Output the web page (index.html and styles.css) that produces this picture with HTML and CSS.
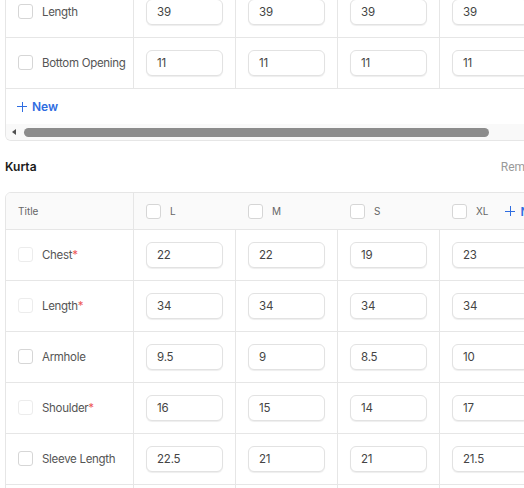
FILE: index.html
```html
<!DOCTYPE html>
<html lang="en">
<head>
  <meta charset="UTF-8" />
  <meta name="viewport" content="width=device-width, initial-scale=1.0" />
  <title>Size Chart</title>
  <link rel="stylesheet" href="styles.css">
</head>
<body>
  <div class="page">
    <div class="card card-top">
      <div class="row">
        <div class="cell title-cell"><span class="check"></span>Length</div>
        <div class="cell"><input class="val" value="39" /></div>
        <div class="cell"><input class="val" value="39" /></div>
        <div class="cell"><input class="val" value="39" /></div>
        <div class="cell"><input class="val" value="39" /></div>
      </div>
      <div class="row">
        <div class="cell title-cell"><span class="check"></span>Bottom Opening</div>
        <div class="cell"><input class="val" value="11" /></div>
        <div class="cell"><input class="val" value="11" /></div>
        <div class="cell"><input class="val" value="11" /></div>
        <div class="cell"><input class="val" value="11" /></div>
      </div>
      <div class="new-row">
        <button class="add-btn"><span class="plus"></span>New</button>
      </div>
      <div class="hscroll">
        <span class="arrow-left"></span>
        <span class="thumb"></span>
      </div>
    </div>

    <div class="section-head">
      <span class="section-name">Kurta</span>
      <button class="remove-btn">Remove</button>
    </div>

    <div class="card">
      <div class="row head-row">
        <div class="cell title-cell head-title">Title</div>
        <div class="cell head-cell"><span class="check"></span>L</div>
        <div class="cell head-cell"><span class="check"></span>M</div>
        <div class="cell head-cell"><span class="check"></span>S</div>
        <div class="cell head-cell"><span class="check"></span>XL<button class="add-btn add-col"><span class="plus"></span>New</button></div>
      </div>
      <div class="row">
        <div class="cell title-cell"><span class="check light"></span>Chest<span class="req">*</span></div>
        <div class="cell"><input class="val" value="22" /></div>
        <div class="cell"><input class="val" value="22" /></div>
        <div class="cell"><input class="val" value="19" /></div>
        <div class="cell"><input class="val" value="23" /></div>
      </div>
      <div class="row">
        <div class="cell title-cell"><span class="check light"></span>Length<span class="req">*</span></div>
        <div class="cell"><input class="val" value="34" /></div>
        <div class="cell"><input class="val" value="34" /></div>
        <div class="cell"><input class="val" value="34" /></div>
        <div class="cell"><input class="val" value="34" /></div>
      </div>
      <div class="row">
        <div class="cell title-cell"><span class="check"></span>Armhole</div>
        <div class="cell"><input class="val" value="9.5" /></div>
        <div class="cell"><input class="val" value="9" /></div>
        <div class="cell"><input class="val" value="8.5" /></div>
        <div class="cell"><input class="val" value="10" /></div>
      </div>
      <div class="row">
        <div class="cell title-cell"><span class="check light"></span>Shoulder<span class="req">*</span></div>
        <div class="cell"><input class="val" value="16" /></div>
        <div class="cell"><input class="val" value="15" /></div>
        <div class="cell"><input class="val" value="14" /></div>
        <div class="cell"><input class="val" value="17" /></div>
      </div>
      <div class="row">
        <div class="cell title-cell"><span class="check"></span>Sleeve Length</div>
        <div class="cell"><input class="val" value="22.5" /></div>
        <div class="cell"><input class="val" value="21" /></div>
        <div class="cell"><input class="val" value="21" /></div>
        <div class="cell"><input class="val" value="21.5" /></div>
      </div>
      <div class="row">
        <div class="cell title-cell"></div>
        <div class="cell"></div>
        <div class="cell"></div>
        <div class="cell"></div>
        <div class="cell"></div>
      </div>
    </div>
  </div>
</body>
</html>
```

FILE: styles.css
```css
body {
  margin: 0;
  overflow: hidden;
  font-family: Inter, 'Noto Sans', sans-serif;
  font-size: 11.5px;
  letter-spacing: -0.3px;
  color: #555;
  background: white;
}
.page {
  width: 560px;
  margin-left: 5px;
}
.card {
  border: 1px solid #e6e6e6;
  border-radius: 6px;
  overflow: hidden;
  background: white;
}
.card-top {
  margin-top: -13px;
  border-top: none;
  border-top-left-radius: 0;
  border-top-right-radius: 0;
}
.row {
  display: flex;
  border-bottom: 1px solid #e6e6e6;
}
.cell {
  box-sizing: border-box;
  flex: none;
  width: 102px;
  height: 50px;
  padding: 0 12px;
  display: flex;
  align-items: center;
  white-space: nowrap;
  border-right: 1px solid #e6e6e6;
}
.title-cell {
  width: 128px;
  padding-bottom: 1px;
}
.check {
  box-sizing: border-box;
  width: 15px;
  height: 15px;
  margin-right: 9px;
  border: 1px solid #d6d6d6;
  border-radius: 3px;
  background: white;
  flex: none;
}
.check.light {
  border-color: #ececec;
}
.req {
  color: #ee5a5a;
}
.val {
  box-sizing: border-box;
  width: 77px;
  height: 26px;
  padding: 0 10px;
  border: 1px solid #e2e2e2;
  border-radius: 6px;
  box-shadow: 0 1px 1px rgba(0,0,0,0.07);
  font-family: Inter, 'Noto Sans', sans-serif;
  font-size: 11.5px;
  letter-spacing: -0.2px;
  color: #444;
  outline: none;
}
.head-row {
  background: #fafafa;
}
.head-row .cell {
  height: 36px;
  font-size: 10px;
  letter-spacing: 0;
  color: #666;
}
.head-cell {
  border-right-color: transparent;
}
.head-title {
  color: #777;
}
.add-btn {
  display: flex;
  align-items: center;
  padding: 0;
  border: none;
  background: none;
  font-family: Inter, 'Noto Sans', sans-serif;
  font-size: 12px;
  font-weight: 600;
  letter-spacing: 0;
  color: #2f6de1;
  cursor: pointer;
}
.plus {
  position: relative;
  width: 10px;
  height: 10px;
  margin-right: 5px;
}
.plus::before, .plus::after {
  content: "";
  position: absolute;
  background: #2f6de1;
}
.plus::before {
  left: 0; top: 4.5px; width: 10px; height: 1.2px;
}
.plus::after {
  top: 0; left: 4.5px; width: 1.2px; height: 10px;
}
.add-col {
  margin-left: 17px;
}
.new-row {
  height: 35px;
  padding: 0 11px;
  display: flex;
  align-items: center;
}
.hscroll {
  height: 16px;
  background: #f9f9f9;
  display: flex;
  align-items: center;
}
.arrow-left {
  width: 0;
  height: 0;
  margin-left: 6px;
  border-top: 3.5px solid transparent;
  border-bottom: 3.5px solid transparent;
  border-right: 4px solid #505050;
}
.thumb {
  width: 465px;
  height: 9px;
  margin-left: 8px;
  border-radius: 5px;
  background: #8c8c8c;
}
.section-head {
  height: 51px;
  display: flex;
  align-items: center;
  justify-content: space-between;
}
.section-name {
  font-size: 12px;
  font-weight: 600;
  letter-spacing: 0;
  color: #1a1a1a;
}
.remove-btn {
  padding: 0;
  border: none;
  background: none;
  font-family: Roboto, sans-serif;
  font-size: 12px;
  color: #999;
  margin-right: 21px;
}
```
